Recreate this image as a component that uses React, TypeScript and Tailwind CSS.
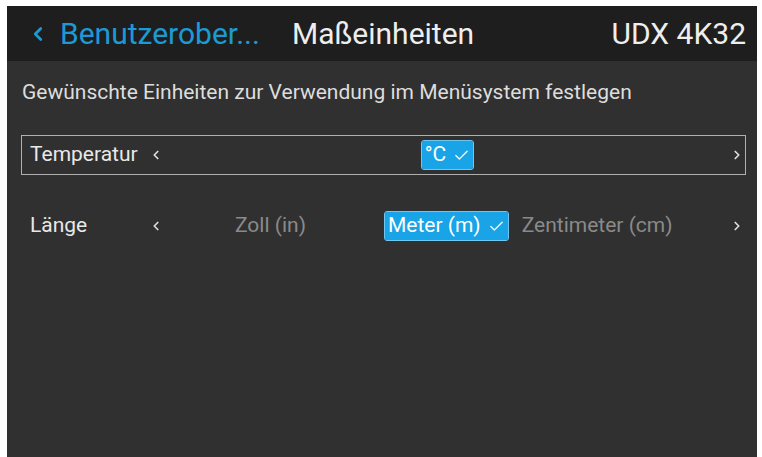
import { Check, ChevronLeft, ChevronRight } from 'lucide-react';

const font = { fontFamily: 'Roboto, "Liberation Sans", sans-serif' };

function Chip({ children }: { children: React.ReactNode }) {
  return (
    <span className="inline-flex items-center gap-[7px] bg-[#18a4e6] text-white rounded-[2px] px-[3px] h-[28px] outline outline-1 outline-[#6fc6ee]">
      {children}
      <Check size={17} strokeWidth={2} className="text-white/90" />
    </span>
  );
}

export default function App() {
  return (
    <div className="w-[762px] h-[457px] bg-white pl-[7px] pt-[6px] pr-[5px]" style={font}>
      <div className="h-full bg-[#303030] flex flex-col">
        {/* Kopfzeile */}
        <div className="h-[55px] shrink-0 bg-[#1e1e1e] flex items-center pl-[20px] pr-[11px] text-[30px]">
          <ChevronLeft size={22} strokeWidth={3} className="text-[#1c9ad6] mr-[11px]" />
          <span className="text-[#1c9ad6] w-[232px]">Benutzerober...</span>
          <span className="text-[#eeeeee]">Maßeinheiten</span>
          <span className="ml-auto text-[#eeeeee]">UDX 4K32</span>
        </div>

        <div className="pl-[15px] pt-[18px] text-[21px] text-[#dddddd] leading-[26px]">
          Gewünschte Einheiten zur Verwendung im Menüsystem festlegen
        </div>

        {/* Temperatur */}
        <div className="ml-[14px] mr-[11px] mt-[30px] h-[40px] border border-[#b0b0b0] flex items-center text-[21px] text-[#e8e8e8]">
          <span className="pl-[8px] w-[127px]">Temperatur</span>
          <ChevronLeft size={14} strokeWidth={3} className="text-[#dddddd]" />
          <div className="flex-1 flex justify-center pl-[2px]">
            <Chip>°C</Chip>
          </div>
          <ChevronRight size={14} strokeWidth={3} className="text-[#dddddd] mr-[1px]" />
        </div>

        {/* Länge */}
        <div className="ml-[14px] mr-[11px] mt-[35px] h-[32px] flex items-center text-[21px]">
          <span className="pl-[9px] w-[128px] text-[#e8e8e8]">Länge</span>
          <ChevronLeft size={14} strokeWidth={3} className="text-[#dddddd]" />
          <span className="ml-[72px] text-[#8a8a8a]">Zoll (in)</span>
          <span className="ml-[79px]"><Chip>Meter (m)</Chip></span>
          <span className="ml-[14px] text-[#8a8a8a]">Zentimeter (cm)</span>
          <ChevronRight size={14} strokeWidth={3} className="text-[#dddddd] ml-auto mr-[2px]" />
        </div>
      </div>
    </div>
  );
}
